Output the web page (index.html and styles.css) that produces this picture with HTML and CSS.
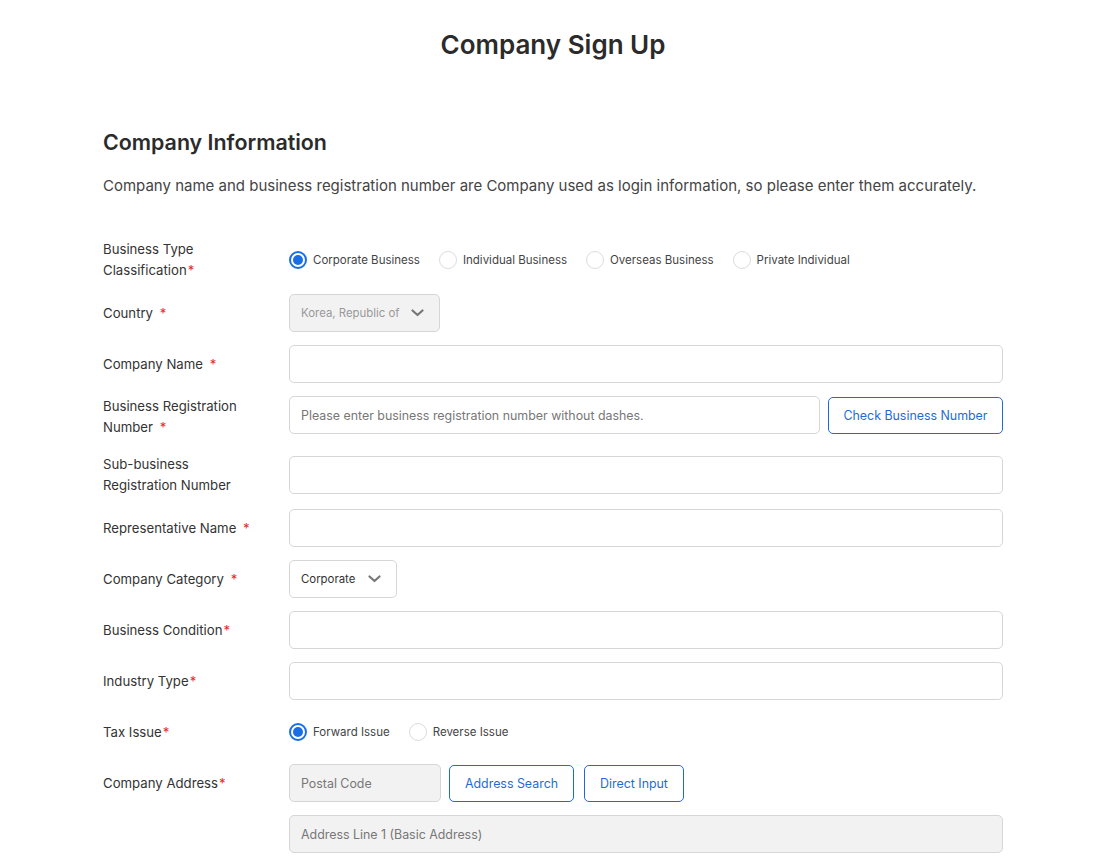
FILE: index.html
```html
<!DOCTYPE html>
<html lang="en">
<head>
<meta charset="utf-8">
<title>Company Sign Up</title>
<link rel="stylesheet" href="styles.css">
</head>
<body>
<div class="page">
  <h1 class="title">Company Sign Up</h1>
  <h2 class="section-title">Company Information</h2>
  <p class="desc">Company name and business registration number are Company used as login information, so please enter them accurately.</p>

  <div class="form">
    <div class="row row-2l">
      <div class="label">Business Type<br>Classification<span class="req tight">*</span></div>
      <div class="field radios">
        <label class="radio"><span class="dot on"></span>Corporate Business</label>
        <label class="radio"><span class="dot"></span>Individual Business</label>
        <label class="radio"><span class="dot"></span>Overseas Business</label>
        <label class="radio"><span class="dot"></span>Private Individual</label>
      </div>
    </div>

    <div class="row">
      <div class="label">Country <span class="req">*</span></div>
      <div class="field">
        <div class="select select-country disabled">
          <span>Korea, Republic of</span>
          <svg class="chev" width="13" height="8" viewBox="0 0 13 8"><path d="M1.5 1.5 L6.5 6 L11.5 1.5" fill="none" stroke="#777" stroke-width="2.2" stroke-linecap="round" stroke-linejoin="round"/></svg>
        </div>
      </div>
    </div>

    <div class="row">
      <div class="label">Company Name <span class="req">*</span></div>
      <div class="field"><div class="input"></div></div>
    </div>

    <div class="row row-2l row-top">
      <div class="label">Business Registration<br>Number <span class="req">*</span></div>
      <div class="field with-btn">
        <div class="input ph">Please enter business registration number without dashes.</div>
        <button class="btn btn-check">Check Business Number</button>
      </div>
    </div>

    <div class="row row-2l row-sub">
      <div class="label">Sub-business<br>Registration Number</div>
      <div class="field"><div class="input"></div></div>
    </div>

    <div class="row">
      <div class="label">Representative Name <span class="req">*</span></div>
      <div class="field"><div class="input"></div></div>
    </div>

    <div class="row">
      <div class="label">Company Category <span class="req">*</span></div>
      <div class="field">
        <div class="select select-cat">
          <span>Corporate</span>
          <svg class="chev" width="13" height="8" viewBox="0 0 13 8"><path d="M1.5 1.5 L6.5 6 L11.5 1.5" fill="none" stroke="#777" stroke-width="2.2" stroke-linecap="round" stroke-linejoin="round"/></svg>
        </div>
      </div>
    </div>

    <div class="row">
      <div class="label">Business Condition<span class="req tight">*</span></div>
      <div class="field"><div class="input"></div></div>
    </div>

    <div class="row">
      <div class="label">Industry Type<span class="req tight">*</span></div>
      <div class="field"><div class="input"></div></div>
    </div>

    <div class="row">
      <div class="label">Tax Issue<span class="req tight">*</span></div>
      <div class="field radios">
        <label class="radio"><span class="dot on"></span>Forward Issue</label>
        <label class="radio"><span class="dot"></span>Reverse Issue</label>
      </div>
    </div>

    <div class="row">
      <div class="label">Company Address<span class="req tight">*</span></div>
      <div class="field addr">
        <div class="input disabled ph postal">Postal Code</div>
        <button class="btn btn-search">Address Search</button>
        <button class="btn btn-direct">Direct Input</button>
      </div>
    </div>

    <div class="row">
      <div class="label"></div>
      <div class="field"><div class="input disabled ph">Address Line 1 (Basic Address)</div></div>
    </div>
  </div>
</div>
</body>
</html>
```

FILE: styles.css
```css
* { box-sizing: border-box; }
html, body { margin: 0; padding: 0; background: #fff; }
body {
  font-family: Inter, "Noto Sans", "Liberation Sans", sans-serif;
  color: #333;
}
.page {
  width: 900px;
  margin-left: 103px;
  padding-top: 28px;
}
.title {
  margin: 0;
  text-align: center;
  font-size: 26px;
  font-weight: 600;
  line-height: 34px;
  color: #2b2b2b;
}
.section-title {
  margin: 65px 0 0;
  font-size: 21.4px;
  font-weight: 600;
  line-height: 30px;
  color: #2b2b2b;
}
.desc {
  margin: 17px 0 0;
  font-size: 15px;
  line-height: 24px;
  color: #444;
}
.form {
  margin-top: 41px;
  display: flex;
  flex-direction: column;
  gap: 13px;
}
.row {
  display: flex;
  align-items: center;
  min-height: 38px;
}
.row-2l { min-height: 42px; }
.row-sub { margin-top: 3px; }
.label {
  width: 186px;
  flex: none;
  font-size: 13.2px;
  line-height: 21px;
  color: #333;
}
.req { color: #e3262b; margin-left: 3px; }
.req.tight { margin-left: 1px; }
.field {
  flex: 1;
  display: flex;
  align-items: center;
}
.input {
  flex: 1;
  height: 38px;
  border: 1px solid #d6d6d6;
  border-radius: 5px;
  background: #fff;
  display: flex;
  align-items: center;
  padding: 0 11px;
  font-size: 12.4px;
  color: #777;
}
.input.disabled { background: #f2f2f2; }
.with-btn { gap: 8px; }
.row-top .with-btn { align-self: flex-start; }
.btn {
  height: 37px;
  border: 1px solid #1f6bd6;
  border-radius: 5px;
  background: #fff;
  color: #1f6bd6;
  font-family: inherit;
  font-size: 12.4px;
  padding: 0 15px;
  flex: none;
}
.btn-check { width: 175px; padding: 0; }
.addr { gap: 8px; }
.addr .postal { flex: none; width: 152px; }
.btn-search { width: 125px; padding: 0; }
.btn-direct { width: 100px; padding: 0; margin-left: 2px; }
.radios { gap: 0; height: 38px; }
.radio {
  display: inline-flex;
  align-items: center;
  font-size: 11.5px;
  color: #444;
  margin-right: 19px;
}
.dot {
  width: 18px;
  height: 18px;
  border-radius: 50%;
  border: 1px solid #dcdcdc;
  background: #fff;
  margin-right: 6px;
  flex: none;
  position: relative;
}
.dot.on { border: 2px solid #1a6fe6; }
.dot.on::after {
  content: "";
  position: absolute;
  left: 2px; top: 2px;
  width: 10px; height: 10px;
  border-radius: 50%;
  background: #1a6fe6;
}
.select {
  height: 38px;
  border: 1px solid #d6d6d6;
  border-radius: 5px;
  display: flex;
  align-items: center;
  justify-content: space-between;
  padding: 0 15px 0 11px;
  font-size: 11.4px;
  color: #333;
  background: #fff;
}
.select.disabled { background: #f2f2f2; color: #999; }
.select-country { width: 151px; }
.select-cat { width: 108px; }
.chev { flex: none; }
```
